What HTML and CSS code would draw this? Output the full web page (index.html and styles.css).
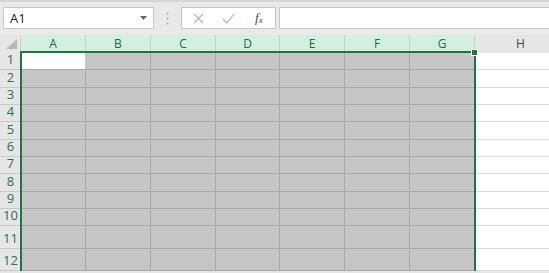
FILE: index.html
```html
<!DOCTYPE html>
<html lang="en">
<head>
  <meta charset="UTF-8">
  <title>Sheet1</title>
  <link rel="stylesheet" href="styles.css">
</head>
<body>
  <div class="formula-bar">
    <div class="name-box">
      <span>A1</span>
      <svg class="caret" width="7" height="4" viewBox="0 0 7 4"><path d="M0 0h7L3.5 4z" fill="#666"/></svg>
    </div>
    <div class="grip">
      <svg width="3" height="13" viewBox="0 0 3 13"><circle cx="1.5" cy="1.5" r="1" fill="#a8a8a8"/><circle cx="1.5" cy="6.5" r="1" fill="#a8a8a8"/><circle cx="1.5" cy="11.5" r="1" fill="#a8a8a8"/></svg>
    </div>
    <div class="fx-box">
      <svg width="11" height="11" viewBox="0 0 11 11"><path d="M1 1l9 9M10 1l-9 9" stroke="#b4b4b4" stroke-width="1.2" fill="none"/></svg>
      <svg width="13" height="11" viewBox="0 0 13 11"><path d="M1 6l4 4 7-9" stroke="#b4b4b4" stroke-width="1.2" fill="none"/></svg>
      <span class="fx">f<sub>x</sub></span>
    </div>
    <div class="formula-input"></div>
  </div>

  <div class="sheet" id="sheet">
    <div class="selection"><span class="handle"></span></div>
  </div>

  <script>
    const sheet = document.getElementById("sheet");
    const cols = ["A", "B", "C", "D", "E", "F", "G", "H"];
    let html = '<div class="corner"><span class="tri"></span></div>';
    cols.forEach(c => {
      html += `<div class="ch ${c === "H" ? "" : "sel"}">${c}</div>`;
    });
    for (let r = 1; r <= 12; r++) {
      html += `<div class="rh">${r}</div>`;
      cols.forEach(c => {
        let cls = c === "H" ? "cell" : "cell on";
        if (r === 1 && c === "A") cls = "cell active";
        html += `<div class="${cls}"></div>`;
      });
    }
    sheet.insertAdjacentHTML("beforeend", html);
  </script>
</body>
</html>
```

FILE: styles.css
```css
body {
  margin: 0;
  width: 549px;
  height: 273px;
  overflow: hidden;
  background: #e6e6e6;
  font-family: 'Segoe UI', 'Open Sans', sans-serif;
}
.formula-bar {
  height: 35px;
  border-top: 2px solid #d6d6d6;
  background: #e9e9e9;
  display: flex;
  align-items: flex-start;
  padding-top: 5px;
  box-sizing: border-box;
  padding-left: 3px;
}
.name-box {
  width: 151px;
  height: 22px;
  box-sizing: border-box;
  background: white;
  border: 1px solid #c6c6c6;
  display: flex;
  align-items: center;
  justify-content: space-between;
  padding: 0 6px 0 6px;
  font-size: 13px;
  color: #222;
}
.grip {
  width: 27px;
  height: 22px;
  display: flex;
  align-items: center;
  justify-content: center;
}
.fx-box {
  width: 95px;
  height: 22px;
  box-sizing: border-box;
  background: white;
  border: 1px solid #c6c6c6;
  display: flex;
  align-items: center;
  gap: 18px;
  padding-left: 11px;
}
.fx {
  font-family: 'Liberation Serif', serif;
  font-style: italic;
  font-size: 13px;
  color: #444;
  margin-left: 2px;
}
.fx sub {
  font-size: 9px;
  vertical-align: -1px;
}
.formula-input {
  flex: 1;
  height: 22px;
  margin-left: 3px;
  box-sizing: border-box;
  background: white;
  border: 1px solid #c6c6c6;
  border-right: none;
}
.sheet {
  position: relative;
  height: 236px;
  overflow: hidden;
  display: grid;
  grid-template-columns: 21px 65px 65px 65px 64px 65px 65px 65px 92px;
  grid-template-rows: 18px 17px 18px 17px 17px 18px 17px 17px 18px 17px 17px 23px 22px;
  font-size: 12px;
}
.corner {
  position: relative;
  background: #e6e6e6;
  border-right: 1px solid #cdcdcd;
}
.tri {
  position: absolute;
  right: 3px;
  bottom: 4px;
  width: 0;
  height: 0;
  border-left: 11px solid transparent;
  border-bottom: 10px solid #b8b8b8;
}
.ch {
  display: flex;
  align-items: center;
  justify-content: center;
  background: #e6e6e6;
  color: #444;
  border-right: 1px solid #cdcdcd;
  box-sizing: border-box;
  padding-bottom: 1px;
}
.ch.sel {
  background: #d3efdf;
  color: #1e6b45;
  border-right-color: #b9d7c5;
}
.rh {
  display: flex;
  align-items: flex-end;
  justify-content: center;
  padding-bottom: 1px;
  background: #e6e6e6;
  color: #2a7152;
  font-size: 13px;
  border-bottom: 1px solid #c9c9c9;
  box-sizing: border-box;
}
.cell {
  background: white;
  border-bottom: 1px solid #dadada;
  box-sizing: border-box;
}
.cell.on {
  background: #c6c6c6;
  border-right: 1px solid #a8a8a8;
  border-bottom: 1px solid #a8a8a8;
}
.cell.active {
  background: white;
  border-right: 1px solid #c6c6c6;
  border-bottom: 1px solid #a8a8a8;
}
.selection {
  position: absolute;
  left: 20px;
  top: 16px;
  width: 456px;
  height: 224px;
  box-sizing: border-box;
  border: 2px solid #217346;
  z-index: 2;
}
.handle {
  position: absolute;
  right: -4px;
  top: -4px;
  width: 5px;
  height: 5px;
  background: #217346;
  border: 1px solid white;
}
```
